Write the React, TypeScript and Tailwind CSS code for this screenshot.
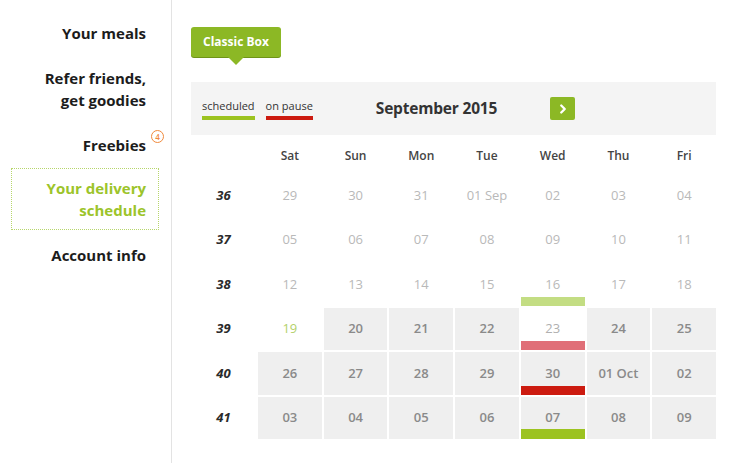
import {ChevronRight} from "lucide-react";

type Cell = {
    label: string;
    kind: "past" | "today" | "open" | "skip";
    bar?: "soft" | "pause" | "paused" | "scheduled";
};

const DAYS = ["Sat", "Sun", "Mon", "Tue", "Wed", "Thu", "Fri"];

const past = (labels: string[]): Cell[] => labels.map(label => ({label, kind: "past"}));
const open = (labels: string[]): Cell[] => labels.map(label => ({label, kind: "open"}));

const WEEKS: {week: number; cells: Cell[]}[] = [
    {week: 36, cells: past(["29", "30", "31", "01 Sep", "02", "03", "04"])},
    {week: 37, cells: past(["05", "06", "07", "08", "09", "10", "11"])},
    {
        week: 38,
        cells: [
            ...past(["12", "13", "14", "15"]),
            {label: "16", kind: "past", bar: "soft"},
            ...past(["17", "18"])
        ]
    },
    {
        week: 39,
        cells: [
            {label: "19", kind: "today"},
            ...open(["20", "21", "22"]),
            {label: "23", kind: "skip", bar: "pause"},
            ...open(["24", "25"])
        ]
    },
    {
        week: 40,
        cells: [
            ...open(["26", "27", "28", "29"]),
            {label: "30", kind: "open", bar: "paused"},
            ...open(["01 Oct", "02"])
        ]
    },
    {
        week: 41,
        cells: [
            ...open(["03", "04", "05", "06"]),
            {label: "07", kind: "open", bar: "scheduled"},
            ...open(["08", "09"])
        ]
    }
];

const cellStyle: Record<Cell["kind"], string> = {
    past: "bg-white text-[#b9b9b9]",
    today: "bg-white text-[#b3d16a]",
    open: "bg-[#efefef] text-[#8a8a8a] font-semibold",
    skip: "bg-white text-[#b0b0b0]"
};

const barStyle: Record<NonNullable<Cell["bar"]>, string> = {
    soft: "shadow-[inset_0_-9px_0_#c3dd83]",
    pause: "shadow-[inset_0_-9px_0_#e06f78]",
    paused: "shadow-[inset_0_-9px_0_#cc1b10]",
    scheduled: "shadow-[inset_0_-10px_0_#9cc320]"
};

function Sidebar() {
    return (
        <nav className="w-[172px] h-full shrink-0 border-r border-[#e3e3e3] flex flex-col items-end pr-[12px] pt-[22px] text-[15px] leading-[22px] font-bold text-[#1c1c1c]">
            <a className="pr-[13px]">Your meals</a>
            <a className="pr-[13px] mt-[23px] text-right">
                Refer friends,
                <br />
                get goodies
            </a>
            <a className="pr-[13px] mt-[23px] relative">
                Freebies
                <span className="absolute -right-[5px] -top-[4px] w-[13px] h-[13px] rounded-full border border-[#f08a3c] text-[#f08a3c] text-[8px] leading-[11px] text-center font-semibold">
                    4
                </span>
            </a>
            <a className="w-[148px] mt-[12px] py-[8px] pr-[12px] border border-dotted border-[#b7d66c] text-right text-[#9cc42a]">
                Your delivery
                <br />
                schedule
            </a>
            <a className="pr-[13px] mt-[14px]">Account info</a>
        </nav>
    );
}

function Header() {
    return (
        <div className="h-[53px] mt-[25px] bg-[#f4f4f4] flex items-center pl-[11px]">
            <div className="flex gap-[11px] text-[11px] leading-[14px] text-[#333] pt-[2px]">
                <div className="flex flex-col gap-[3px]">
                    <span>scheduled</span>
                    <span className="h-[4px] bg-[#9cc320]" />
                </div>
                <div className="flex flex-col gap-[3px]">
                    <span>on pause</span>
                    <span className="h-[4px] bg-[#cc1b10]" />
                </div>
            </div>
            <h2 className="ml-[63px] text-[15.5px] font-bold text-[#333] tracking-[-0.2px]">September 2015</h2>
            <button className="ml-[53px] w-[25px] h-[23px] rounded-[2px] bg-[#8cb825] flex items-center justify-center text-white">
                <ChevronRight size={14} strokeWidth={4} />
            </button>
        </div>
    );
}

function Calendar() {
    return (
        <div className="grid grid-cols-[65px_repeat(7,1fr)] grid-rows-[37px_repeat(6,42.5px)] gap-[2px] text-[13px]">
            <div />
            {DAYS.map(day => (
                <div key={day} className="flex items-center justify-center pt-[4px] text-[12px] font-semibold text-[#444]">
                    {day}
                </div>
            ))}
            {WEEKS.map(({week, cells}) => [
                <div
                    key={`w${week}`}
                    className="flex items-center justify-center text-[13px] font-bold italic text-[#2b2b2b]"
                >
                    {week}
                </div>,
                ...cells.map((cell, i) => (
                    <div
                        key={`${week}-${i}`}
                        className={`flex items-center justify-center ${cellStyle[cell.kind]} ${cell.bar ? barStyle[cell.bar] : ""}`}
                    >
                        {cell.label}
                    </div>
                ))
            ])}
        </div>
    );
}

export default function App() {
    return (
        <div
            className="w-[740px] h-[463px] bg-white flex overflow-hidden"
            style={{fontFamily: '"Open Sans", "Noto Sans", sans-serif'}}
        >
            <Sidebar />
            <main className="flex-1 pl-[19px] pr-[24px] pt-[27px]">
                <div className="relative inline-flex h-[30px] px-[12px] items-center rounded-[3px] bg-[#8cb825] text-white text-[12px] font-bold shadow-[0_1px_0_#6f9418]">
                    Classic Box
                    <span className="absolute left-1/2 -translate-x-1/2 top-full border-x-[8px] border-x-transparent border-t-[8px] border-t-[#8cb825]" />
                </div>
                <Header />
                <Calendar />
            </main>
        </div>
    );
}
